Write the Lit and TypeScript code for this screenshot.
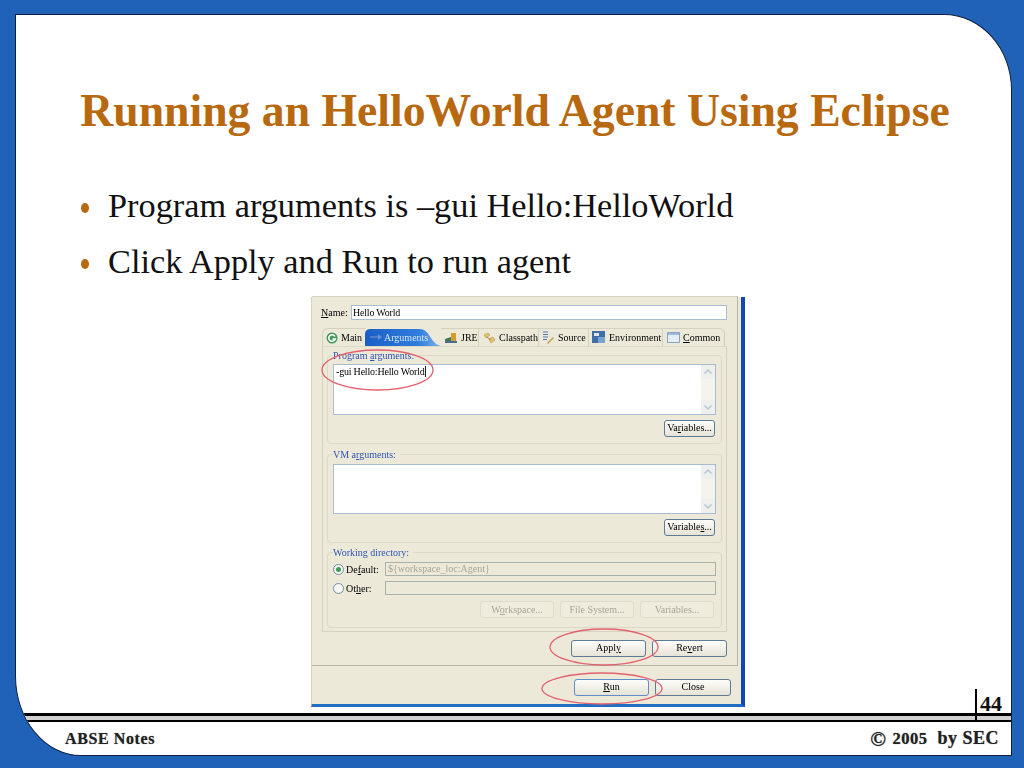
import { LitElement, html, css, svg } from "lit";
import { customElement } from "lit/decorators.js";

const icons: Record<string, unknown> = {
  main: svg`<svg class="ic" width="12" height="12" viewBox="0 0 12 12"><circle cx="6" cy="6" r="5.500" fill="#3f9a5a"/><path d="M9 4.500A3.300 3.300 0 1 0 9.200 7H6.500" fill="none" stroke="#fff" stroke-width="1.600"/></svg>`,
  args: svg`<svg class="ic" width="14" height="10" viewBox="0 0 14 10"><path d="M1 5h9" stroke="#4f7cc4" stroke-width="2"/><path d="M9 2l4 3-4 3z" fill="#6f8fc8"/></svg>`,
  jre: svg`<svg class="ic" width="14" height="12" viewBox="0 0 14 12"><path d="M1 7l9-3v6H1z" fill="#3d7a4e"/><path d="M7 1h5v9H7z" fill="#d89a32"/><path d="M1 9h12v2H1z" fill="#4b6b96"/></svg>`,
  cp: svg`<svg class="ic" width="14" height="12" viewBox="0 0 14 12"><path d="M2 3l4-2 2 2-4 3zM7 7l4-2 2 3-4 3z" fill="#e5c36a" stroke="#b59443" stroke-width=".6"/><path d="M5 5l4 3" stroke="#a98b44"/></svg>`,
  src: svg`<svg class="ic" width="13" height="13" viewBox="0 0 13 13"><path d="M1 1h5M1 3.500h5M1 6h5M1 8.500h4" stroke="#4f7cb8" stroke-width="1.200"/><path d="M5 12l6-6 1 1-6 6z" fill="#c0a050"/></svg>`,
  env: svg`<svg class="ic" width="14" height="13" viewBox="0 0 14 13"><path d="M0 0h13v12H0z" fill="#3f6ea8"/><path d="M2 2h5v3H2z" fill="#dfe8f2"/><path d="M6 6h7v6H6z" fill="#79a4cf"/></svg>`,
  com: svg`<svg class="ic" width="13" height="11" viewBox="0 0 13 11"><path d="M.5.500h12v10H.5z" fill="#e4ecf6" stroke="#8aa3c2"/><path d="M1 1h11v2H1z" fill="#9db8d8"/></svg>`,
};

const tabs = [
  { w: 43, icon: "main", label: html`Main`, cls: "" },
  { w: 76, icon: "args", label: html`Arguments`, cls: "active" },
  { w: 38, icon: "jre", label: html`JRE`, cls: "sep" },
  { w: 60, icon: "cp", label: html`Classpath`, cls: "sep" },
  { w: 50, icon: "src", label: html`Source`, cls: "sep" },
  { w: 74, icon: "env", label: html`Environment`, cls: "sep" },
  { w: 62, icon: "com", label: html`<u>C</u>ommon`, cls: "" },
];

@customElement("app-root")
export class AppRoot extends LitElement {
  static styles = css`
    :host { display: block; width: 1024px; height: 768px; box-sizing: border-box; background: #1f62b8; padding: 14px 12px 12px 15px; font-family: "Liberation Serif", serif; }
    .slide { position: relative; box-sizing: border-box; width: 997px; height: 742px; background: #fff; border: 1.500px solid #0b1f3f; border-radius: 0 68px 0 66px / 0 76px 0 80px; overflow: hidden; display: flex; flex-direction: column; }
    h1 { margin: 0; padding: 69px 0 0 3px; height: 54px; line-height: 54px; text-align: center; font-size: 45.700px; font-weight: bold; color: #b8690f; white-space: nowrap; }
    ul { list-style: none; margin: 45px 0 0; padding: 0 0 0 92px; }
    li { position: relative; height: 56px; line-height: 44px; font-size: 34.300px; color: #111; white-space: nowrap; }
    li::before { content: ""; position: absolute; left: -27px; top: 20px; width: 8px; height: 10px; border-radius: 50%; background: #b8690f; }

    .shot { position: relative; align-self: flex-start; margin: 2px 0 0 295px; box-sizing: border-box; width: 434px; height: 410px; background: #ece9d8; border-right: 4px solid #1245b5; border-bottom: 3px solid #1f6fc4; border-left: 1px solid #d5d2c0; filter: blur(0.7px); font-size: 10px; color: #000; }
    .main { box-sizing: border-box; width: 426px; height: 370px; padding: 8px 10px 9px; border-right: 1px solid #b5b3a6; border-bottom: 1px solid #b5b3a6; border-top: 1px solid #d5d2c0; margin-top: -1px; }
    .name { display: flex; align-items: center; height: 15px; margin-left: -1px; }
    .name span { width: 30px; }
    .field { box-sizing: border-box; background: #fff; border: 1px solid #a9bcd0; line-height: 13px; padding: 0 1px; flex: 1; color: #000; letter-spacing: -.2px; }
    .folder { margin: 8px 1px 0 0; }
    .tabs { display: flex; height: 18px; align-items: stretch; }
    .tab { position: relative; box-sizing: border-box; display: flex; align-items: center; gap: 3px; padding-left: 3px; white-space: nowrap; border-top: 1px solid #d5d2c0; }
    .tab:first-child { border-left: 1px solid #d5d2c0; border-top-left-radius: 6px; }
    .tab:last-child { border-right: 1px solid #cfccb9; border-top-right-radius: 6px; padding-left: 4px; }
    .tab.sep { border-right: 1px solid #d5d2c0; }
    .tab.active { color: #d7e4f5; border-top: none; padding-left: 4px; gap: 1px; }
    .tab.active > span, .tab.active > .ic { position: relative; }
    .tabbg { position: absolute; left: 0; top: 0; }
    .ic { flex: none; }
    .body { box-sizing: border-box; height: 286px; border: 1px solid #d5d2c0; border-top-color: #dcd9c8; padding: 8px 4px 0; margin-right: 0; width: 405px; }
    .group { box-sizing: border-box; border: 1px solid #dcd9c8; border-radius: 4px; padding: 0 5px 6px; }
    .group + .group { margin-top: 10px; }
    .group.wd { margin-top: 9px; padding-bottom: 9px; }
    .legend { width: fit-content; height: 12px; line-height: 12px; margin-top: -6px; padding-right: 4px; background: #ece9d8; color: #2f55b5; }
    .area { position: relative; box-sizing: border-box; height: 51px; margin-top: 2px; background: #fff; border: 1px solid #a9bcd0; padding: 1px 2px; line-height: 12px; color: #000; letter-spacing: -.2px; }
    .group.vm .area { margin-top: 3px; height: 50px; }
    .cursor { display: inline-block; width: 1px; height: 11px; background: #222; vertical-align: -2px; }
    .scroll { position: absolute; right: 0; top: 0; bottom: 0; width: 14px; background: #f4f3ec; display: flex; flex-direction: column; justify-content: space-between; }
    .scroll svg { display: block; background: #eef0ee; }
    .actions { display: flex; justify-content: flex-end; margin-top: 5px; }
    .btn { box-sizing: border-box; width: 51px; height: 17px; line-height: 14px; text-align: center; background: linear-gradient(#fdfdfa, #e6e3d6); border: 1.500px solid #5d7a96; border-radius: 3px; color: #000; margin-right: 1px; white-space: nowrap; }
    .btn.wide { width: 75px; margin: 0; }
    .btn.wider { width: 76px; margin: 0; }
    .btn.off { width: 74px; margin: 0; background: #efecdd; border: 1px solid #dedbca; color: #a8a698; line-height: 15px; }
    .btn.focus { border-color: #5f8fcb; }
    .row { display: flex; align-items: center; height: 14px; margin-top: 5px; }
    .row.first { margin-top: 3px; }
    .radio { box-sizing: border-box; width: 11px; height: 11px; border: 1px solid #6f8fa8; border-radius: 50%; background: #f8f8f2; margin-right: 2px; display: grid; place-items: center; flex: none; }
    .radio i { width: 5px; height: 5px; border-radius: 50%; background: #3f9a5a; }
    .row label { width: 39px; flex: none; }
    .dis { box-sizing: border-box; flex: 1; height: 14px; border: 1px solid #a8b2aa; background: #ece9d8; color: #a8a698; line-height: 12px; padding: 0 2px; margin-left: 0; }
    .offs { display: flex; justify-content: flex-end; gap: 6px; margin: 6px 2px 0 0; }
    .apply { display: flex; justify-content: flex-end; gap: 6px; margin: 8px 0 0 0; }
    .foot { display: flex; justify-content: flex-end; gap: 6px; padding: 13px 10px 0 0; }
    .rings { position: absolute; left: -1px; top: 0; pointer-events: none; }

    .footer { margin-top: auto; }
    .rules { height: 9px; box-sizing: border-box; border-top: 3.500px solid #000; border-bottom: 2.500px solid #000; background: #d0d0d0; }
    .page { position: absolute; right: 9px; bottom: 41px; font-weight: bold; font-size: 22px; line-height: 20px; color: #111; }
    .bar { position: absolute; right: 34px; bottom: 33px; width: 2.500px; height: 33px; background: #000; }
    .notes { display: flex; justify-content: space-between; align-items: center; height: 33px; padding: 0 12px 0 49px; font-weight: bold; font-size: 16px; color: #222; letter-spacing: .6px; text-shadow: 0 0 1px #777; white-space: pre; }
    .copy { font-size: 16.500px; display: flex; align-items: center; gap: 6px; letter-spacing: .5px; }
    .copy b { font-size: 21px; line-height: 16px; }
    .copy i { font-style: normal; margin-right: 4px; }
    .copy span { font-size: 18px; }
  `;

  private area(bars: boolean, text: unknown) {
    return html`<div class="area">${text}${bars ? html`<div class="scroll">
      <svg width="14" height="14" viewBox="0 0 14 14"><path d="M3.500 8.500L7 5l3.500 3.500" fill="none" stroke="#b9c6d6" stroke-width="1.500"/></svg>
      <svg width="14" height="14" viewBox="0 0 14 14"><path d="M3.500 5.500L7 9l3.500-3.500" fill="none" stroke="#b9c6d6" stroke-width="1.500"/></svg>
    </div>` : ""}</div>`;
  }

  render() {
    return html`<div class="slide">
      <h1>Running an HelloWorld Agent Using Eclipse</h1>
      <ul>
        <li>Program arguments is –gui Hello:HelloWorld</li>
        <li>Click Apply and Run to run agent</li>
      </ul>
      <div class="shot">
        <div class="main">
          <div class="name"><span><u>N</u>ame:</span><div class="field">Hello World</div></div>
          <div class="folder">
            <div class="tabs">
              ${tabs.map((t) => html`<div class="tab ${t.cls}" style="width:${t.w}px">
                ${t.cls === "active" ? svg`<svg class="tabbg" width="80" height="18" viewBox="0 0 80 18"><defs><linearGradient id="tb" x1="0" x2="1" y1="0" y2="0"><stop offset="0" stop-color="#1a5ec6"/><stop offset=".7" stop-color="#2f7ddc"/><stop offset="1" stop-color="#7fb2ea"/></linearGradient></defs><path d="M0 18V6Q0 1 6 1H54C66 1 64 15 76 18Z" fill="url(#tb)"/></svg>` : ""}
                ${icons[t.icon]}<span>${t.label}</span></div>`)}
            </div>
            <div class="body">
              <div class="group">
                <div class="legend">Program <u>a</u>rguments:</div>
                ${this.area(true, html`-gui Hello:Hello World<span class="cursor"></span>`)}
                <div class="actions"><div class="btn">Va<u>r</u>iables...</div></div>
              </div>
              <div class="group vm">
                <div class="legend">VM a<u>r</u>guments:</div>
                ${this.area(true, "")}
                <div class="actions"><div class="btn">Variable<u>s</u>...</div></div>
              </div>
              <div class="group wd">
                <div class="legend">Working directory:</div>
                <div class="row first"><div class="radio"><i></i></div><label>De<u>f</u>ault:</label><div class="dis">\${workspace_loc:Agent}</div></div>
                <div class="row"><div class="radio"></div><label>Ot<u>h</u>er:</label><div class="dis"></div></div>
                <div class="offs"><div class="btn off">W<u>o</u>rkspace...</div><div class="btn off">File System...</div><div class="btn off">Variables...</div></div>
              </div>
            </div>
          </div>
          <div class="apply"><div class="btn wide">Appl<u>y</u></div><div class="btn wide">Re<u>v</u>ert</div></div>
        </div>
        <div class="foot"><div class="btn wide focus"><u>R</u>un</div><div class="btn wider">Close</div></div>
        <svg class="rings" width="434" height="410" viewBox="0 0 434 410" fill="none" stroke="#e4606e" stroke-width="1.300">
          <ellipse cx="66.500" cy="73" rx="55.500" ry="20"/>
          <ellipse cx="293" cy="350" rx="54" ry="18"/>
          <ellipse cx="291" cy="391.500" rx="60" ry="15.500"/>
        </svg>
      </div>
      <div class="page">44</div>
      <div class="bar"></div>
      <div class="footer">
        <div class="rules"></div>
        <div class="notes"><span>ABSE Notes</span><span class="copy"><b>©</b><i>2005</i><span>by SEC</span></span></div>
      </div>
    </div>`;
  }
}
